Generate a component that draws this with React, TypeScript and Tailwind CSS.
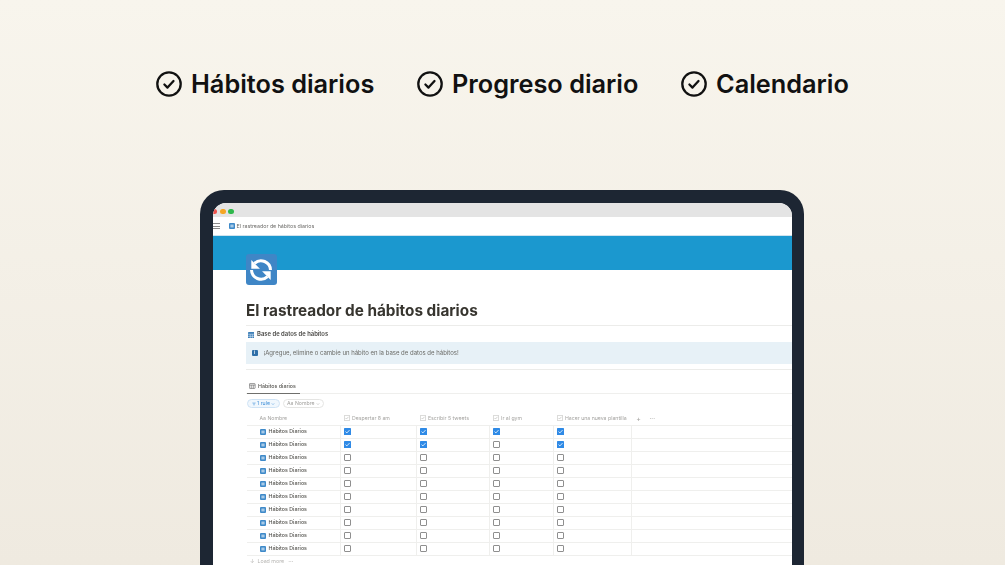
import React from "react";

function CheckCircle() {
  return (
    <svg width="26" height="26" viewBox="0 0 26 26" fill="none" stroke="#111" strokeWidth="2.3" strokeLinecap="round" strokeLinejoin="round" className="shrink-0">
      <circle cx="13" cy="13" r="11.7" />
      <path d="M8.4 13.5l3.1 3.1 6-6.6" />
    </svg>
  );
}

function Feature({ text, className }: { text: string; className: string }) {
  return (
    <div className={"flex items-center gap-[9px] " + className}>
      <CheckCircle />
      <span className="text-[25.3px] leading-[34px] font-semibold text-[#111]">{text}</span>
    </div>
  );
}

function PageIcon() {
  return (
    <svg width="6" height="6" viewBox="0 0 6 6" className="shrink-0">
      <rect width="6" height="6" rx="1" fill="#3f8ac9" />
      <path d="M1.4 2.2h3.2M1.4 3.8h3.2" stroke="#fff" strokeWidth="0.8" />
    </svg>
  );
}

function Box({ on }: { on: boolean }) {
  if (on) {
    return (
      <svg width="7" height="7" viewBox="0 0 7 7" className="shrink-0">
        <rect width="7" height="7" rx="0.6" fill="#2f8ae6" />
        <path d="M1.5 3.6l1.4 1.3 2.6-2.8" stroke="#fff" strokeWidth="0.8" fill="none" />
      </svg>
    );
  }
  return <div className="w-[7px] h-[7px] border border-[#8f8f8f] rounded-[1px] shrink-0 bg-white" />;
}

function HeadCheck({ text, w, children }: { text: string; w: string; children?: React.ReactNode }) {
  return (
    <div className={"flex items-center gap-[2.5px] pl-[3px] " + w}>
      <svg width="6" height="6" viewBox="0 0 6 6" fill="none" stroke="#b5b5b2" strokeWidth="0.6" className="shrink-0">
        <rect x="0.3" y="0.3" width="5.4" height="5.4" rx="0.6" />
        <path d="M1.5 3l1 1 2-2.2" />
      </svg>
      <span className="whitespace-nowrap pt-[1px]">{text}</span>
      {children}
    </div>
  );
}

const rows = [
  [true, true, true, true],
  [true, true, false, true],
  [false, false, false, false],
  [false, false, false, false],
  [false, false, false, false],
  [false, false, false, false],
  [false, false, false, false],
  [false, false, false, false],
  [false, false, false, false],
  [false, false, false, false],
];

function Row({ vals }: { vals: boolean[] }) {
  return (
    <div className="flex h-[13px] border-b border-[#efefed] items-stretch">
      <div className="w-[93.5px] flex items-center gap-[2.5px] pl-[13px] border-r border-[#efefed] shrink-0">
        <PageIcon />
        <span className="text-[5.3px] pt-[1px] text-[#55544f] font-medium whitespace-nowrap">Hábitos Diarios</span>
      </div>
      <div className="w-[76px] flex items-center pl-[3px] border-r border-[#efefed] shrink-0"><Box on={vals[0]} /></div>
      <div className="w-[73px] flex items-center pl-[3px] border-r border-[#efefed] shrink-0"><Box on={vals[1]} /></div>
      <div className="w-[64px] flex items-center pl-[3px] border-r border-[#efefed] shrink-0"><Box on={vals[2]} /></div>
      <div className="w-[78px] flex items-center pl-[3px] border-r border-[#efefed] shrink-0"><Box on={vals[3]} /></div>
      <div className="flex-1" />
    </div>
  );
}

export default function App() {
  return (
    <div className="h-[565px] w-[1005px] overflow-hidden flex flex-col items-center bg-gradient-to-b from-[#f8f5ed] to-[#efeae0] font-['Inter',sans-serif]">
      <div className="w-full flex pt-[67px] h-[190px] pl-[156px] shrink-0">
        <Feature text="Hábitos diarios" className="w-[261px] h-[34px]" />
        <Feature text="Progreso diario" className="w-[264px] h-[34px]" />
        <Feature text="Calendario" className="h-[34px]" />
      </div>

      <div className="w-[604px] h-[375px] mr-[1px] bg-[#1d2633] rounded-t-[24px] pt-[12.5px] pl-[12.5px] pr-[12px] shrink-0">
        <div className="w-[579.5px] h-[400px] bg-white rounded-t-[13px] overflow-hidden flex flex-col blur-[0.35px]">
          <div className="h-[14.5px] bg-[#e4e4e4] shrink-0 relative">
            <span className="absolute left-[-1px] top-[6px] w-[5.5px] h-[5.5px] rounded-full bg-[#f0524c]" />
            <span className="absolute left-[7.5px] top-[6px] w-[5.5px] h-[5.5px] rounded-full bg-[#f5a623]" />
            <span className="absolute left-[15.5px] top-[6px] w-[5.5px] h-[5.5px] rounded-full bg-[#2fb84c]" />
          </div>
          <div className="h-[18px] flex items-center shrink-0">
            <div className="w-[7px] flex flex-col gap-[1.2px]">
              <div className="h-[1px] bg-[#8a8a8a]" />
              <div className="h-[1px] bg-[#8a8a8a]" />
              <div className="h-[1px] bg-[#8a8a8a]" />
            </div>
            <div className="ml-[9px]"><PageIcon /></div>
            <span className="ml-[2px] pt-[1px] text-[5.3px] text-[#6b6a67] whitespace-nowrap">El rastreador de hábitos diarios</span>
          </div>
          <div className="h-[35px] bg-[#1b98cf] border-t border-[#cfe3ee] shrink-0" />

          <div className="pl-[33px] flex flex-col">
            <div className="w-[31px] h-[31px] mt-[-16px] rounded-[3px] bg-[#3f86c6] flex items-center justify-center">
              <svg width="28" height="28" viewBox="0 0 26 26" fill="none" stroke="#fff" strokeWidth="2.8">
                <path d="M21.8 13A8.8 8.8 0 0 0 7 6.8" />
                <path d="M4.2 13A8.8 8.8 0 0 0 19 19.2" />
                <path d="M4 3.8v8h8z" fill="#fff" stroke="none" />
                <path d="M22 22.2v-8h-8z" fill="#fff" stroke="none" />
              </svg>
            </div>
            <div className="mt-[14px] ml-[0.5px] text-[15.3px] leading-[24px] font-bold text-[#37352f] whitespace-nowrap">El rastreador de hábitos diarios</div>
            <div className="h-px bg-[#ececea] mt-[2px]" />
            <div className="h-[15.5px] flex items-center pl-[2px] pt-[2px] gap-[3px]">
              <svg width="6.5" height="6.5" viewBox="0 0 7 7" className="shrink-0">
                <rect width="7" height="7" rx="0.8" fill="#3d7fb8" />
                <path d="M0 2.4h7M2.4 2.4V7M4.7 2.4V7M0 4.7h7" stroke="#dcebf6" strokeWidth="0.6" />
              </svg>
              <span className="text-[5.9px] font-semibold text-[#4a4946] whitespace-nowrap">Base de datos de hábitos</span>
            </div>
            <div className="h-[22px] bg-[#e7f1f7] flex items-center pl-[6px]">
              <div className="w-[6px] h-[6px] rounded-[1px] bg-[#2f6fa8] flex items-center justify-center text-white text-[4px] font-bold">i</div>
              <span className="ml-[6px] text-[6px] text-[#6a6a66] whitespace-nowrap">¡Agregue, elimine o cambie un hábito en la base de datos de hábitos!</span>
            </div>
            <div className="h-px bg-[#ececea] mt-[5px]" />

            <div className="mt-[10px] pl-[1.5px] h-[14px] border-b border-[#efefed]">
              <div className="flex items-center gap-[2.5px] pl-[2px] h-[14px] w-[53px] border-b border-[#6f6f6c]">
                <svg width="6.5" height="6" viewBox="0 0 7 6" fill="none" stroke="#666" strokeWidth="0.7" className="shrink-0">
                  <rect x="0.4" y="0.4" width="6.2" height="5.2" rx="0.6" />
                  <path d="M0.4 2h6.2M2.4 2v3.6M4.6 2v3.6" />
                </svg>
                <span className="text-[5.3px] pt-[1px] font-medium text-[#55544f] whitespace-nowrap">Hábitos diarios</span>
              </div>
            </div>

            <div className="flex items-center gap-[3px] pl-[1.5px] mt-[5.5px] h-[9px]">
              <div className="h-[9px] w-[33px] rounded-full border border-[#cfe3f5] bg-[#f0f7fd] flex items-center justify-center gap-[1.5px] text-[#3f8fd8] text-[5.2px] whitespace-nowrap">
                <svg width="4" height="4" viewBox="0 0 4 4" stroke="#3f8fd8" strokeWidth="0.5"><path d="M0.3 1h3.4M1 2h2M1.5 3h1" /></svg>
                1 rule
                <svg width="4" height="4" viewBox="0 0 4 4" stroke="#3f8fd8" strokeWidth="0.5" fill="none"><path d="M0.8 1.4L2 2.6 3.2 1.4" /></svg>
              </div>
              <div className="h-[9px] w-[41px] rounded-full border border-[#e5e5e3] flex items-center justify-center gap-[1.5px] text-[#a3a29f] text-[5.2px] whitespace-nowrap">
                Aa Nombre
                <svg width="4" height="4" viewBox="0 0 4 4" stroke="#a3a29f" strokeWidth="0.5" fill="none"><path d="M0.8 1.4L2 2.6 3.2 1.4" /></svg>
              </div>
            </div>

            <div className="mt-[4.5px] ml-[1.5px]">
              <div className="flex h-[13px] border-b border-[#efefed] items-center text-[5.2px] text-[#a5a4a1]">
                <div className="w-[93.5px] pl-[12.5px] pt-[1px]">Aa Nombre</div>
                <HeadCheck text="Despertar 8 am" w="w-[76px]" />
                <HeadCheck text="Escribir 5 tweets" w="w-[73px]" />
                <HeadCheck text="Ir al gym" w="w-[64px]" />
                <HeadCheck text="Hacer una nueva plantilla" w="w-[78px]">
                  <span className="ml-[7px] text-[7px] leading-none">+</span>
                  <span className="ml-[6px] tracking-[0.2px] font-bold">···</span>
                </HeadCheck>
              </div>
              {rows.map((r, i) => <Row key={i} vals={r} />)}
              <div className="flex items-center gap-[3px] pl-[3px] h-[12px] text-[5.3px] text-[#b5b4b1]">
                <span>↓</span><span>Load more</span><span className="ml-[1px] font-bold">···</span>
              </div>
            </div>
          </div>
        </div>
      </div>
    </div>
  );
}
